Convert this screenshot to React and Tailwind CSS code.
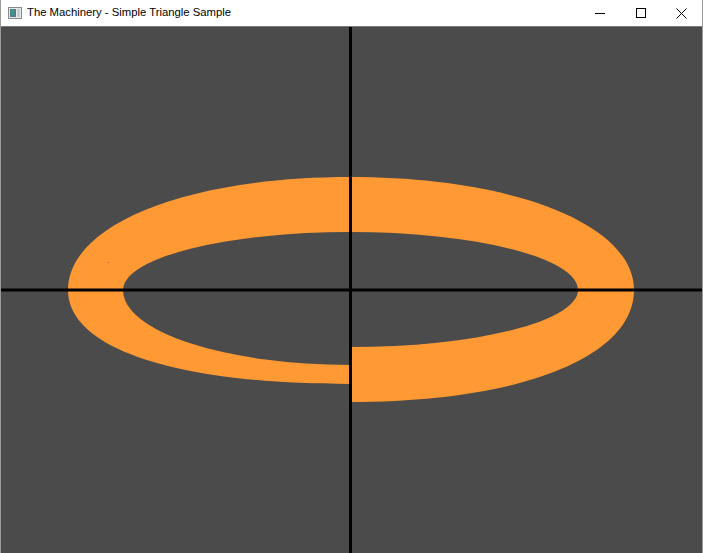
const TitleIcon = () => (
  <svg width="14" height="12" viewBox="0 0 14 12" className="shrink-0">
    <rect x="0.5" y="0.5" width="13" height="11" fill="#e8e8e8" stroke="#8a8a8a" />
    <rect x="2" y="2" width="6" height="8" fill="#4f7f86" />
    <rect x="3" y="3" width="3" height="5" fill="#3a9a8a" />
    <rect x="9.5" y="2" width="2" height="8" fill="#b8c4c6" />
  </svg>
);

const WindowButtons = () => (
  <div className="flex h-full">
    <div className="w-[41px] flex items-center justify-center">
      <svg width="10" height="10" viewBox="0 0 10 10">
        <path d="M0 5.5 H10" stroke="#000" strokeWidth="1" />
      </svg>
    </div>
    <div className="w-[41px] flex items-center justify-center">
      <svg width="10" height="10" viewBox="0 0 10 10">
        <rect x="0.5" y="0.5" width="9" height="9" fill="none" stroke="#000" strokeWidth="1" />
      </svg>
    </div>
    <div className="w-[41px] flex items-center justify-center">
      <svg width="11" height="11" viewBox="0 0 11 11">
        <path d="M0.5 0.5 L10.5 10.5 M10.5 0.5 L0.5 10.5" stroke="#000" strokeWidth="1" />
      </svg>
    </div>
  </div>
);

// ring is drawn as two mismatched halves, like the sample renders it
const Scene = () => (
  <svg width="701" height="526" viewBox="1 27 701 526" className="block">
    <path
      d="M350 177 C186.4 177 68 224.5 68 290 C68 348.3 175.2 384 350 384 L350 365 A227 75 0 0 1 123 290 A227 58 0 0 1 350 232 Z"
      fill="#ff9933"
    />
    <path
      d="M350 177 C514.7 177 634 224.5 634 290 C634 357.2 520.4 402 350 402 L350 347 A228 57 0 0 0 578 290 A228 58 0 0 0 350 232 Z"
      fill="#ff9933"
    />
    <rect x="108" y="262" width="1" height="1" fill="#a06a3a" />
    <rect x="1" y="288.5" width="701" height="3" fill="#000" />
    <rect x="349" y="27" width="3" height="526" fill="#000" />
  </svg>
);

export default function App() {
  return (
    <div className="w-[703px] h-[553px] flex flex-col bg-white border-x border-[#9a9a9a] overflow-hidden">
      <div className="h-[26px] flex items-center justify-between bg-white shrink-0">
        <div className="flex items-center gap-[5px] pl-[7px]">
          <TitleIcon />
          <span className="text-[11.3px] text-black leading-none font-['Liberation_Sans',sans-serif] pb-[1px]">
            The Machinery - Simple Triangle Sample
          </span>
        </div>
        <WindowButtons />
      </div>
      <div className="h-px bg-[#7a7a7a] shrink-0" />
      <div className="flex-1 bg-[#4b4b4b]">
        <Scene />
      </div>
    </div>
  );
}
